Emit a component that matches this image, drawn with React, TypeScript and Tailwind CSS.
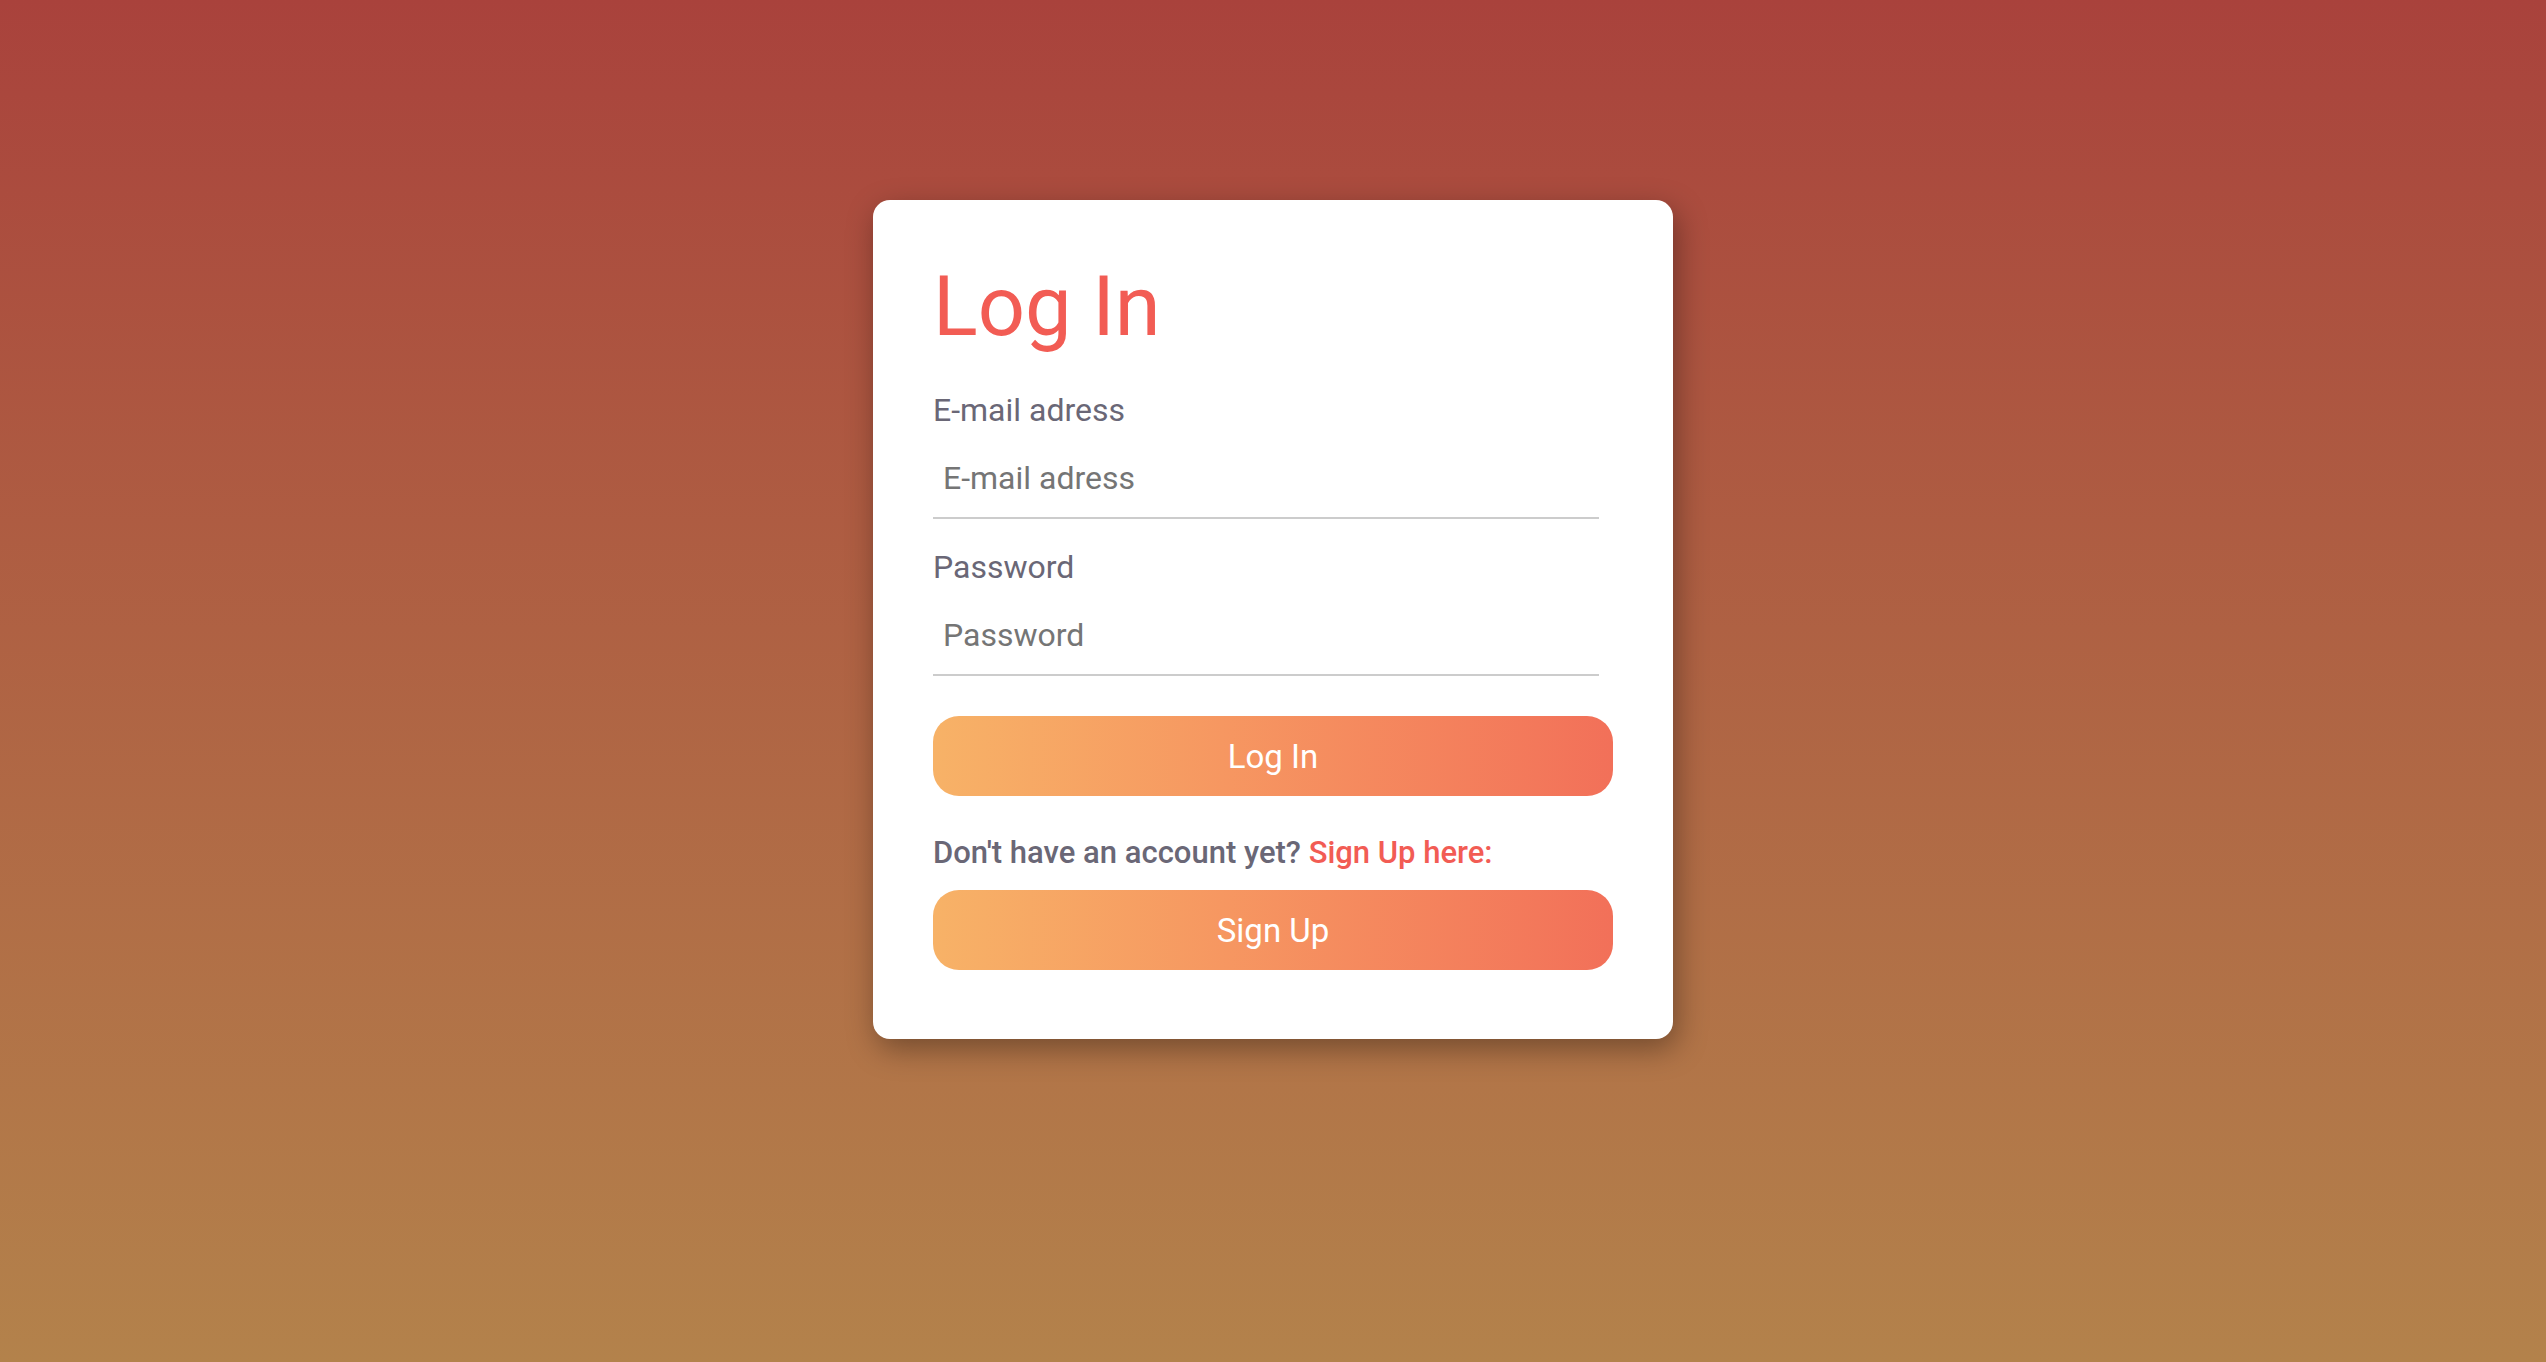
export default function App() {
  return (
    <div
      className="w-full h-[1362px] bg-gradient-to-b from-[#a9423c] to-[#b3824b] flex justify-center"
      style={{ fontFamily: "Roboto, 'Liberation Sans', sans-serif" }}
    >
      <div className="mt-[200px] w-[800px] h-[839px] bg-white rounded-[17px] shadow-[4px_10px_30px_rgba(0,0,0,0.35)] px-[60px] pt-[60px] flex flex-col">
        <h1 className="text-[83px] leading-[94px] text-[#f25c54] font-normal">Log In</h1>
        <label className="mt-[39px] text-[32px] leading-[35px] text-[#6a6776]">E-mail adress</label>
        <input
          type="text"
          placeholder="E-mail adress"
          className="mt-[12px] w-[666px] px-[10px] py-[21px] text-[32px] leading-[35px] border-b-2 border-[#cccccc] outline-none placeholder:text-[#757575] text-[#757575]"
        />
        <label className="mt-[31px] text-[32px] leading-[35px] text-[#6a6776]">Password</label>
        <input
          type="password"
          placeholder="Password"
          className="mt-[12px] w-[666px] px-[10px] py-[21px] text-[32px] leading-[35px] border-b-2 border-[#cccccc] outline-none placeholder:text-[#757575] text-[#757575]"
        />
        <button className="mt-[40px] h-[80px] w-full rounded-[26px] bg-gradient-to-r from-[#f7b267] to-[#f27059] text-white text-[33px] leading-[35px]">
          Log In
        </button>
        <p className="mt-[40px] text-[31px] leading-[33px] font-medium text-[#6a6776]">
          Don't have an account yet? <span className="text-[#f25c54]">Sign Up here:</span>
        </p>
        <button className="mt-[21px] h-[80px] w-full rounded-[26px] bg-gradient-to-r from-[#f7b267] to-[#f27059] text-white text-[33px] leading-[35px]">
          Sign Up
        </button>
      </div>
    </div>
  );
}
